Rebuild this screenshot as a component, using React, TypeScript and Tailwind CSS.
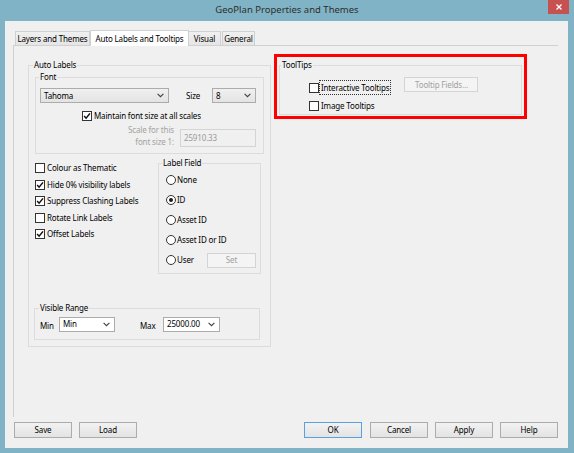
import React from "react";

function Chevron() {
  return (
    <svg width="7" height="5" viewBox="0 0 7 5" className="shrink-0">
      <path d="M0.6 0.8 L3.5 3.7 L6.4 0.8" fill="none" stroke="#404040" strokeWidth="1.1" />
    </svg>
  );
}

function CheckBox({ checked }: { checked?: boolean }) {
  return (
    <div className="w-[10px] h-[10px] shrink-0 border border-[#333333] bg-white flex items-center justify-center">
      {checked && (
        <svg width="8" height="8" viewBox="0 0 8 8">
          <path d="M1.1 4.1 L3.1 6.2 L7 1.4" fill="none" stroke="#111111" strokeWidth="1.5" />
        </svg>
      )}
    </div>
  );
}

function Radio({ checked }: { checked?: boolean }) {
  return (
    <div className="w-[10px] h-[10px] shrink-0 rounded-full border border-[#333333] bg-white flex items-center justify-center">
      {checked && <div className="w-[4px] h-[4px] rounded-full bg-[#1a1a1a]" />}
    </div>
  );
}

function Btn({ label, primary }: { label: string; primary?: boolean }) {
  return (
    <div
      className={
        "w-[58px] h-[16px] flex items-center justify-center border bg-linear-to-b from-[#f2f2f2] to-[#e3e3e3] " +
        (primary ? "border-[#5aa0e0]" : "border-[#acacac]")
      }
    >
      {label}
    </div>
  );
}

export default function App() {
  return (
    <div className="w-[574px] h-[453px] bg-[#80b3c5] flex flex-col font-['Noto_Sans',sans-serif] text-[8px] leading-[12px] tracking-[-0.15px] text-black select-none">
      {/* Title bar */}
      <div className="relative h-[21px] flex items-center justify-center">
        <span className="text-[9.5px] tracking-normal text-[#2e2e2e] -mt-[1px]">GeoPlan Properties and Themes</span>
        <div className="absolute right-[5px] top-0 w-[21px] h-[14px] bg-[#c75050] flex items-center justify-center">
          <svg width="6" height="6" viewBox="0 0 6 6">
            <path d="M0.5 0.5 L5.5 5.5 M5.5 0.5 L0.5 5.5" stroke="#ffffff" strokeWidth="1.3" />
          </svg>
        </div>
      </div>

      {/* Client */}
      <div className="ml-[5px] mr-[6px] h-[427px] bg-[#f0f0f0] flex flex-col">
        {/* Tabs */}
        <div className="ml-[10px] mt-[9px] h-[15px] flex items-end">
          <div className="w-[75px] h-[14px] flex items-center justify-center border border-b-0 border-[#d0d0d0] bg-linear-to-b from-[#f0f0f0] to-[#e5e5e5]">
            Layers and Themes
          </div>
          <div className="relative z-10 -mb-[1px] w-[99px] h-[16px] flex items-center justify-center border border-b-0 border-[#d0d0d0] bg-white">
            Auto Labels and Tooltips
          </div>
          <div className="w-[32px] h-[14px] flex items-center justify-center border border-b-0 border-l-0 border-[#d0d0d0] bg-linear-to-b from-[#f0f0f0] to-[#e5e5e5]">
            Visual
          </div>
          <div className="ml-[1px] w-[33px] h-[14px] flex items-center justify-center border border-b-0 border-[#d0d0d0] bg-linear-to-b from-[#f0f0f0] to-[#e5e5e5]">
            General
          </div>
        </div>

        {/* Panel */}
        <div className="ml-[8px] w-[545px] h-[372px] border-t border-l border-[#d0d0d0] flex items-start">
          {/* Auto Labels */}
          <fieldset className="ml-[14px] mt-[13px] w-[243px] h-[288px] border border-[#dcdcdc] p-0">
            <legend className="ml-[4px] px-[1px] leading-[12px]">Auto Labels</legend>

            <fieldset className="ml-[6px] w-[229px] h-[83px] border border-[#dcdcdc] p-0">
              <legend className="ml-[3px] px-[1px] leading-[12px]">Font</legend>
              <div className="mt-[5px] h-[15px] flex items-center">
                <div className="ml-[4px] w-[129px] h-[15px] flex items-center justify-between pl-[3px] pr-[4px] border border-[#acacac] bg-linear-to-b from-[#f0f0f0] to-[#e3e3e3]">
                  <span>Tahoma</span>
                  <Chevron />
                </div>
                <span className="ml-[17px] w-[26px]">Size</span>
                <div className="w-[44px] h-[15px] flex items-center justify-between pl-[3px] pr-[4px] border border-[#acacac] bg-linear-to-b from-[#f0f0f0] to-[#e3e3e3]">
                  <span>8</span>
                  <Chevron />
                </div>
              </div>
              <div className="mt-[7px] ml-[46px] h-[12px] flex items-center">
                <CheckBox checked />
                <span className="ml-[2px]">Maintain font size at all scales</span>
              </div>
              <div className="mt-[2px] flex items-start">
                <div className="w-[138px] text-right text-[#a3a3a3]">
                  <div>Scale for this</div>
                  <div>font size 1:</div>
                </div>
                <div className="ml-[6px] mt-[5px] w-[76px] h-[18px] border border-[#d4d4d4] bg-[#f0f0f0] pl-[3px] flex items-center text-[#9a9a9a]">
                  25910.33
                </div>
              </div>
            </fieldset>

            <div className="flex items-start">
              <div className="ml-[6px] mt-[6px] w-[123px] flex flex-col">
                {[
                  ["Colour as Thematic", false],
                  ["Hide 0% visibility labels", true],
                  ["Suppress Clashing Labels", true],
                  ["Rotate Link Labels", false],
                  ["Offset Labels", true],
                ].map(([label, checked]) => (
                  <div key={label as string} className="h-[16.5px] flex items-center">
                    <CheckBox checked={checked as boolean} />
                    <span className="ml-[2px]">{label as string}</span>
                  </div>
                ))}
              </div>
              <fieldset className="mt-[3px] w-[103px] h-[117px] border border-[#dcdcdc] p-0">
                <legend className="ml-[3px] px-[1px] leading-[12px]">Label Field</legend>
                <div className="mt-[1px] flex flex-col">
                  {[
                    ["None", false],
                    ["ID", true],
                    ["Asset ID", false],
                    ["Asset ID or ID", false],
                  ].map(([label, checked]) => (
                    <div key={label as string} className="h-[20px] ml-[7px] flex items-center">
                      <Radio checked={checked as boolean} />
                      <span className="ml-[1px]">{label as string}</span>
                    </div>
                  ))}
                  <div className="h-[20px] ml-[7px] flex items-center">
                    <Radio />
                    <span className="ml-[1px] w-[30px]">User</span>
                    <div className="w-[49px] h-[15px] flex items-center justify-center border border-[#d4d4d4] bg-[#f4f4f4] text-[#a0a0a0]">
                      Set
                    </div>
                  </div>
                </div>
              </fieldset>
            </div>

            <fieldset className="ml-[5px] mt-[28px] w-[226px] h-[38px] border border-[#dcdcdc] p-0">
              <legend className="ml-[4px] px-[1px] leading-[12px]">Visible Range</legend>
              <div className="mt-[3px] h-[15px] flex items-center">
                <span className="ml-[5px] w-[19px] pt-[3px]">Min</span>
                <div className="w-[56px] h-[15px] flex items-center justify-between pl-[3px] pr-[4px] border border-[#acacac] bg-white">
                  <span className="-mt-[2px]">Min</span>
                  <Chevron />
                </div>
                <span className="ml-[25px] w-[23px] pt-[3px]">Max</span>
                <div className="w-[57px] h-[15px] flex items-center justify-between pl-[3px] pr-[4px] border border-[#acacac] bg-white">
                  <span className="-mt-[2px]">25000.00</span>
                  <Chevron />
                </div>
              </div>
            </fieldset>
          </fieldset>

          {/* ToolTips (highlighted) */}
          <div className="ml-[3px] mt-[8px] w-[253px] h-[65px] border-[3px] border-[#ff0000]">
            <fieldset className="ml-[2px] mt-[2px] w-[243px] h-[56px] border border-[#dcdcdc] p-0">
              <legend className="ml-[1px] px-[1px] leading-[12px]">ToolTips</legend>
              <div className="mt-[6px] flex items-start">
                <div className="ml-[29px] mt-[3px] h-[15px] flex items-center">
                  <CheckBox />
                  <span className="h-[15px] px-[1px] flex items-center border border-dotted border-[#333333]">
                    Interactive Tooltips
                  </span>
                </div>
                <div className="ml-[13px] w-[74px] h-[15px] flex items-center justify-center border border-[#d4d4d4] bg-[#f4f4f4] text-[#a0a0a0]">
                  Tooltip Fields...
                </div>
              </div>
              <div className="mt-[5px] ml-[29px] h-[12px] flex items-center">
                <CheckBox />
                <span className="ml-[2px]">Image Tooltips</span>
              </div>
            </fieldset>
          </div>
        </div>

        {/* Bottom buttons */}
        <div className="mt-[5px] ml-[9px] flex items-center">
          <Btn label="Save" />
          <div className="ml-[7px]">
            <Btn label="Load" />
          </div>
          <div className="ml-[167px] flex gap-[7px]">
            <Btn label="OK" primary />
            <div className="ml-[1px]">
              <Btn label="Cancel" />
            </div>
            <Btn label="Apply" />
            <Btn label="Help" />
          </div>
        </div>
      </div>
    </div>
  );
}
